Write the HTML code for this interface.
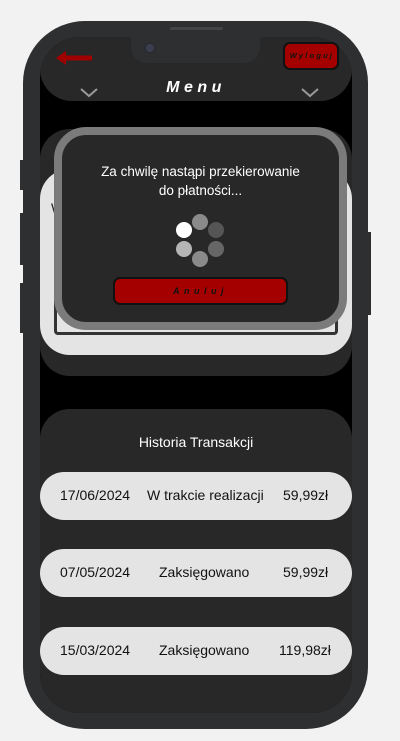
<!DOCTYPE html><html><head><meta charset="utf-8"><style>
*{margin:0;padding:0;box-sizing:border-box}
body{width:400px;height:741px;background:#f2f2f2;position:relative;overflow:hidden;font-family:"Liberation Sans","DejaVu Sans",sans-serif}
.a{position:absolute}
.row{position:absolute;left:40px;width:312px;height:48px;background:#e4e4e4;border-radius:24px;font-size:14px;color:#111}
.row span{position:absolute;top:15px}
.dot{position:absolute;width:16px;height:16px;border-radius:50%}
</style></head><body>
<div class="a" style="left:20px;top:160px;width:4px;height:30px;background:#2e2f31"></div>
<div class="a" style="left:20px;top:213px;width:4px;height:52px;background:#2e2f31"></div>
<div class="a" style="left:20px;top:283px;width:4px;height:50px;background:#2e2f31"></div>
<div class="a" style="left:367px;top:232px;width:4px;height:83px;background:#2e2f31"></div>
<div class="a" style="left:23px;top:21px;width:345px;height:708px;background:#2e2f31;border-radius:62px"></div>
<div class="a" style="left:40px;top:37px;width:312px;height:676px;background:#000;border-radius:40px;overflow:hidden">
 <div class="a" style="left:0;top:0;width:312px;height:64px;background:#282828;border-radius:0 0 32px 32px"></div>
 <div class="a" style="left:0;top:92px;width:312px;height:247px;background:#282828;border-radius:30px"></div>
 <div class="a" style="left:0;top:132px;width:312px;height:186px;background:#e4e4e4;border-radius:30px"></div>
 <div class="a" style="left:11px;top:163px;font-size:14px;color:#222">W</div>
 <div class="a" style="left:14px;top:250px;width:284px;height:48px;border:3px solid #333;border-top:none;border-radius:0 0 4px 4px"></div>
 <div class="a" style="left:0;top:372px;width:312px;height:304px;background:#282828;border-radius:30px 30px 0 0"></div>
</div>
<div class="a" style="left:131px;top:37px;width:129px;height:26px;background:#2e2f31;border-radius:0 0 16px 16px"></div>
<div class="a" style="left:170px;top:27px;width:53px;height:3px;background:#444;border-radius:2px"></div>
<div class="a" style="left:144px;top:42px;width:12px;height:12px;border-radius:50%;background:#3a3e4e;border:2px solid #2a2b33"></div>
<svg class="a" style="left:54px;top:50px" width="40" height="16"><path d="M12 5.5 H38 V10.5 H12 V15 L2 8 L12 1 Z" fill="#a00000"/></svg>
<div class="a" style="left:283px;top:42px;width:56px;height:28px;background:#a50000;border:2px solid #111;border-radius:7px;font-size:7.5px;font-weight:bold;font-style:italic;letter-spacing:2.2px;text-align:center;line-height:24px;color:#111;white-space:nowrap;padding-left:2px">Wyloguj</div>
<div class="a" style="left:0;top:79px;width:392px;text-align:center;color:#fff;font-size:16px;font-weight:900;font-style:italic;letter-spacing:4.5px">Menu</div>
<svg class="a" style="left:80px;top:87px" width="20" height="12"><path d="M1 2 L9 9 L17 2" stroke="#999" stroke-width="2" fill="none"/></svg>
<svg class="a" style="left:301px;top:87px" width="20" height="12"><path d="M1 2 L9 9 L17 2" stroke="#999" stroke-width="2" fill="none"/></svg>
<div class="a" style="left:54px;top:127px;width:293px;height:203px;background:#282828;border:8px solid #7b7b7b;border-radius:32px"></div>
<div class="a" style="left:54px;top:162px;width:293px;text-align:center;color:#fff;font-size:13.5px;line-height:19px">Za chwilę nastąpi przekierowanie<br>do płatności...</div>
<div class="dot" style="left:176px;top:222px;background:#fff"></div>
<div class="dot" style="left:192px;top:214px;background:#8a8a8a"></div>
<div class="dot" style="left:208px;top:222px;background:#555"></div>
<div class="dot" style="left:208px;top:241px;background:#666"></div>
<div class="dot" style="left:192px;top:251px;background:#8a8a8a"></div>
<div class="dot" style="left:176px;top:241px;background:#b5b5b5"></div>
<div class="a" style="left:113px;top:277px;width:175px;height:28px;background:#a50000;border:2px solid #111;border-radius:7px;font-size:9px;font-weight:bold;font-style:italic;letter-spacing:4.5px;text-align:center;line-height:25px;color:#111">Anuluj</div>
<div class="a" style="left:40px;top:434px;width:312px;text-align:center;color:#fff;font-size:14px">Historia Transakcji</div>
<div class="row" style="top:472px"><span style="left:20px">17/06/2024</span><span style="left:107px">W trakcie realizacji</span><span style="left:243px">59,99zł</span></div>
<div class="row" style="top:549px"><span style="left:20px">07/05/2024</span><span style="left:119px">Zaksięgowano</span><span style="left:243px">59,99zł</span></div>
<div class="row" style="top:627px"><span style="left:20px">15/03/2024</span><span style="left:119px">Zaksięgowano</span><span style="left:239px">119,98zł</span></div>
</body></html>
